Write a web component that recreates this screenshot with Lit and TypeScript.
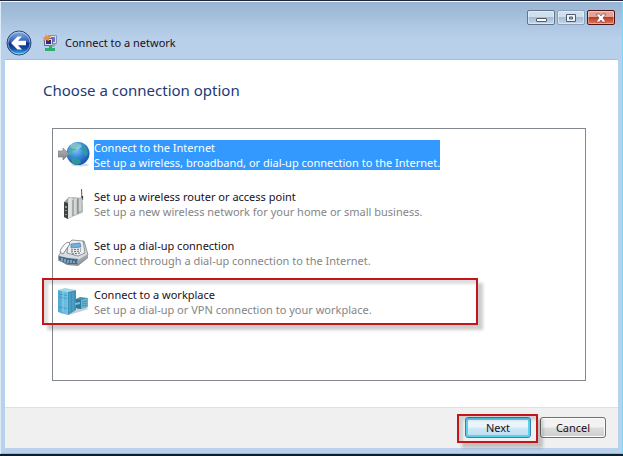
import { LitElement, html, css, svg } from "lit";
import { customElement, state } from "lit/decorators.js";

const globeIcon = svg`
  <svg class="icon" viewBox="0 0 32 32" aria-hidden="true">
    <defs>
      <radialGradient id="sea" cx=".4" cy=".3" r=".75"><stop offset="0" stop-color="#8fcaf5"/><stop offset=".45" stop-color="#3a90e0"/><stop offset="1" stop-color="#154aa6"/></radialGradient>
      <linearGradient id="arrow" x2="0" y2="1"><stop offset="0" stop-color="#b4b4bc"/><stop offset="1" stop-color="#7f8089"/></linearGradient>
    </defs>
    <ellipse cx="22" cy="26" rx="9" ry="1.500" fill="#d5dae2"/>
    <circle cx="20" cy="14.500" r="11.500" fill="url(#sea)"/>
    <path d="M11 10c2-3 4-5 8-6l3 1-3 3-1 3-4 1-1 4-3-1z" fill="#4fae9e" opacity=".85"/>
    <path d="M25 5l3 4 2 5-2 4-2-3-1-3-3-2z M13 18l4 1 5 2 1 3-4 2-5-2z" fill="#2f9d97" opacity=".85"/>
    <ellipse cx="18" cy="7" rx="6" ry="3" fill="#fff" opacity=".25"/>
    <path d="M0 12h5V9l6 6-6 6v-3H0z" fill="url(#arrow)" stroke="#80818b" stroke-width=".7"/>
  </svg>`;

const routerIcon = svg`
  <svg class="icon" viewBox="0 0 32 32" aria-hidden="true">
    <path d="M8 31l17-6v-4l-7 5z" fill="#d2d2d2"/>
    <path d="M24 12L23.500 1" stroke="#5a5a5a" stroke-width="1"/><path d="M24.300 8v4" stroke="#333" stroke-width="1.600"/>
    <path d="M6 14l5-5 13 1 1 13-15 8-4-2z" fill="#9b9c9d"/>
    <path d="M6 14l4 1v16l-4-2z" fill="#404246"/>
    <path d="M10 12c0-3 4-4 5-1v17l-5 3z" fill="#dadbdb"/><path d="M15 12v16" stroke="#77797c"/>
    <path d="M15.500 11c0-2 4-3 4 0v15l-4 2z" fill="#c7c8c9"/><path d="M20 11v15" stroke="#737578"/>
    <path d="M20.500 11c1-2 4-2 4 0l.5 11-4.500 3z" fill="#bbbcbd"/>
    <path d="M12 11v18M17 11v15M22 11v12" stroke="#efefef" stroke-width=".8"/>
    <path d="M8 18v2M8 22v1M8 26v1" stroke="#aad3ba" stroke-width="1.300"/>
  </svg>`;

const phoneIcon = svg`
  <svg class="icon" viewBox="0 0 32 32" aria-hidden="true">
    <path d="M1 23l8 5 11 1 10-8v-3l-8-3z" fill="#8b8f94"/>
    <path d="M1 18l7-10 18-4 4 14-9 8-12 1-9-4z" fill="#d9dde0" stroke="#75797d" stroke-width=".8"/>
    <path d="M10 7l4-4 11 1 2 12-7 3-11-3z" fill="#eceff1" stroke="#6b7075" stroke-width=".7"/>
    <path d="M13 7l9-1 1 4-10 1z" fill="#6fb2e2" stroke="#587890" stroke-width=".7"/>
    <path d="M13 13l10-1M13 15l10-1M14 17l8-1" stroke="#666b72" stroke-dasharray="2 1"/>
    <path d="M2 15c0-3 5-9 8-10l2 2-7 10z" fill="#fafafa" stroke="#6d7177" stroke-width=".8"/>
    <path d="M1 19l9 2 10 1-1 5-9 0-9-4z" fill="#456d8b"/>
    <path d="M4 21v3M7 22v3M10 23v3M13 23v3M16 24v2" stroke="#b9d8ea"/>
    <path d="M20 23l10-6v3l-10 7z" fill="#9fa3a7"/>
  </svg>`;

const serverIcon = svg`
  <svg class="icon" viewBox="0 0 32 32" aria-hidden="true">
    <defs><linearGradient id="tower"><stop offset="0" stop-color="#4aa9d4"/><stop offset="1" stop-color="#76c4e2"/></linearGradient></defs>
    <path d="M1 27l10 2 20-6-8-3z" fill="#c5d1d8"/>
    <path d="M18 13l4-2 8 1v9l-8 2-4-1z" fill="#4593b2"/>
    <path d="M18 13l5 1v9l-5-1z" fill="#2b7898"/><path d="M23 14l7-2v9l-7 2z" fill="#69b4cd"/>
    <path d="M24 16l5-1M24 18l5-1M24 20l5-1" stroke="#4389a4" stroke-width=".8"/>
    <path d="M0 4l7-2 11 2-8 2z" fill="#a3d8ea"/>
    <path d="M0 4l10 2v23L0 26z" fill="url(#tower)"/><path d="M10 6l8-2v20l-8 5z" fill="#3c92b9"/>
    <path d="M1 8l8 1.500M1 11l8 1.500M1 21l8 1.500" stroke="#3a93bb" stroke-width=".8"/>
    <path d="M5 5v21" stroke="#b7e7f4" stroke-width=".6"/><path d="M12 7v19M15 6v19" stroke="#62b0cf" stroke-width=".8"/>
    <path d="M17 18l5-1" stroke="#79bdd2" stroke-width="2"/>
  </svg>`;

const networkIcon = svg`
  <svg class="network" viewBox="0 0 16 18" aria-hidden="true">
    <path d="M6.500 1.500h8v8h-8z" fill="#d6e1f2" stroke="#8492b3"/><path d="M9 3h4v5H9z" fill="#6277cb"/>
    <path d="M2.500 4.500h8v7h-8z" fill="#d9dff0" stroke="#675e90"/><path d="M4 6h5v4H4z" fill="#2a2a8a"/>
    <path d="M10 10h4l-2 3H8z" fill="#9aa4bb"/>
    <path d="M4 0l1 2 4 0-2 3 0 2-3-1-3 1 1-3-2-1 3 0z" fill="#ec9140"/>
    <path d="M7 11h3v3h3v3H3v-3h4z" fill="#2ab06c"/>
  </svg>`;

const options = [
  { title: "Connect to the Internet", detail: "Set up a wireless, broadband, or dial-up connection to the Internet.", icon: globeIcon },
  { title: "Set up a wireless router or access point", detail: "Set up a new wireless network for your home or small business.", icon: routerIcon },
  { title: "Set up a dial-up connection", detail: "Connect through a dial-up connection to the Internet.", icon: phoneIcon },
  { title: "Connect to a workplace", detail: "Set up a dial-up or VPN connection to your workplace.", icon: serverIcon, marked: true },
];

@customElement("app-root")
export class AppRoot extends LitElement {
  @state() private selected = 0;

  static styles = css`
    :host { display: block; font: 11px/15px "Noto Sans", "Open Sans", sans-serif; color: #1a1020; }
    * { box-sizing: border-box; }
    button { font: inherit; color: inherit; margin: 0; padding: 0; }
    .window {
      min-height: 100vh; display: flex; flex-direction: column; padding: 0 5px 6px;
      border-top: 1px solid #20263a; border-bottom: 2px solid #08202f;
      box-shadow: inset 0 1px #f4f8fc, inset 1px 0 #dcebf8, inset -1px 0 #7fd6f3, inset 0 -1px #79c5e0;
      background: linear-gradient(#98b4d2, #b9d0ea 38px, #b9d1ea);
    }
    .caption { display: flex; justify-content: flex-end; gap: 2px; padding: 9px 3px 0; height: 28px; }
    .caption button {
      width: 28px; height: 15px; border: 1px solid #61758c; border-radius: 2px; display: grid; place-items: center;
      background: linear-gradient(#d0dfee 45%, #a6bdd5 50%, #c3d7eb); box-shadow: inset 0 0 0 1px #ffffff66;
    }
    .caption .max { border-color: #8ba1b9; }
    .caption .close { border-color: #4d1518; background: linear-gradient(#e5a396 45%, #c23a22 50%, #df7a5a); }
    .caption svg { display: block; width: 12px; height: 10px; }
    .header { display: flex; align-items: center; height: 30px; padding-bottom: 3px; }
    .back { width: 26px; height: 26px; margin-left: 1px; border: 0; background: none; }
    .back svg { display: block; }
    .network { width: 16px; height: 18px; margin: 0 7px 0 10px; }
    .content { flex: 1; display: flex; flex-direction: column; background: #fff; border-top: 1px solid #a9bfd7; padding: 20px 32px 26px 38px; }
    h1 { margin: 0; font-size: 15px; line-height: 21px; font-weight: 400; color: #1d3a78; }
    .list { flex: 1; margin: 27px 0 0 9px; border: 1px solid #828790; padding: 11px 5px; display: flex; flex-direction: column; gap: 19px; }
    .option { position: relative; display: flex; align-items: center; gap: 4px; height: 30px; border: 0; background: none; text-align: left; }
    .icon { width: 32px; height: 32px; flex: none; }
    .label { display: block; white-space: nowrap; }
    .title, .detail { display: block; }
    .detail { color: #858585; }
    .selected .label { background: #3399ff; }
    .selected .title, .selected .detail { color: #fff; }
    .mark { position: absolute; border: 2px solid #c3161c; box-shadow: 5px 5px 3px #0003, inset 4px 4px 3px #0002; pointer-events: none; }
    .mark.row { inset: -9px 102px -8px -16px; }
    .footer { display: flex; align-items: flex-start; justify-content: flex-end; gap: 9px; height: 41px; padding: 9px 12px 0; background: #f0f0f0; border-top: 1px solid #dfdfdf; }
    .action { position: relative; z-index: 0; }
    .action button {
      display: block; width: 66px; height: 21px; border: 1px solid #707070; border-radius: 3px;
      background: linear-gradient(#f2f2f2 48%, #dcdcdc 52%, #cfcfcf); box-shadow: inset 0 0 0 1px #fcfcfc;
    }
    .action .next { border-color: #3c7fb1; background: linear-gradient(#eaf5fb 48%, #cfe8f5 52%, #b9dcec); box-shadow: inset 0 0 0 2px #58d0f2; }
    .action.primary { z-index: 1; }
    .mark.button { inset: -3px -7px -5px -8px; }
  `;

  render() {
    return html`
      <div class="window">
        <div class="caption">
          <button aria-label="Minimize"><svg viewBox="0 0 12 10"><rect x="1.500" y="5.500" width="10" height="3" rx=".5" fill="#fff" stroke="#505a68"/></svg></button>
          <button class="max" aria-label="Maximize"><svg viewBox="0 0 12 10"><path fill-rule="evenodd" d="M1.500 1.500h9v7h-9zM4.500 4v2h3V4z" fill="#eef5fb" stroke="#505a68"/></svg></button>
          <button class="close" aria-label="Close"><svg viewBox="0 0 12 10"><path d="M1 1h3.500L6 3l1.500-2H11L8 5l3 4H7.500L6 7 4.500 9H1l3-4z" fill="#fff" stroke="#683b40" stroke-width=".6"/></svg></button>
        </div>
        <header class="header">
          <button class="back" aria-label="Back">
            <svg viewBox="0 0 26 26" width="26" height="26">
              <defs><linearGradient id="orb" x2="0" y2="1"><stop offset="0" stop-color="#8fb2e2"/><stop offset=".46" stop-color="#2c5eb4"/><stop offset=".5" stop-color="#0b2d83"/><stop offset=".75" stop-color="#1451aa"/><stop offset="1" stop-color="#48c9f6"/></linearGradient></defs>
              <circle cx="13" cy="13" r="12" fill="url(#orb)" stroke="#2b4673"/>
              <circle cx="13" cy="13" r="11" fill="none" stroke="#d9ecff" stroke-width=".7" opacity=".7"/>
              <path d="M5 13l6.500-6.500h4.500l-4 4.300H20v4.400h-8l4 4.300h-4.500z" fill="#fff"/>
            </svg>
          </button>
          ${networkIcon}
          <span>Connect to a network</span>
        </header>
        <main class="content">
          <h1>Choose a connection option</h1>
          <div class="list">
            ${options.map((o, i) => html`
              <button class="option ${i === this.selected ? "selected" : ""}" aria-pressed=${i === this.selected} @click=${() => (this.selected = i)}>
                ${o.icon}
                <span class="label"><span class="title">${o.title}</span><span class="detail">${o.detail}</span></span>
                ${o.marked ? html`<span class="mark row"></span>` : ""}
              </button>`)}
          </div>
        </main>
        <footer class="footer">
          <div class="action primary"><button class="next">Next</button><span class="mark button"></span></div>
          <div class="action"><button>Cancel</button></div>
        </footer>
      </div>`;
  }
}
